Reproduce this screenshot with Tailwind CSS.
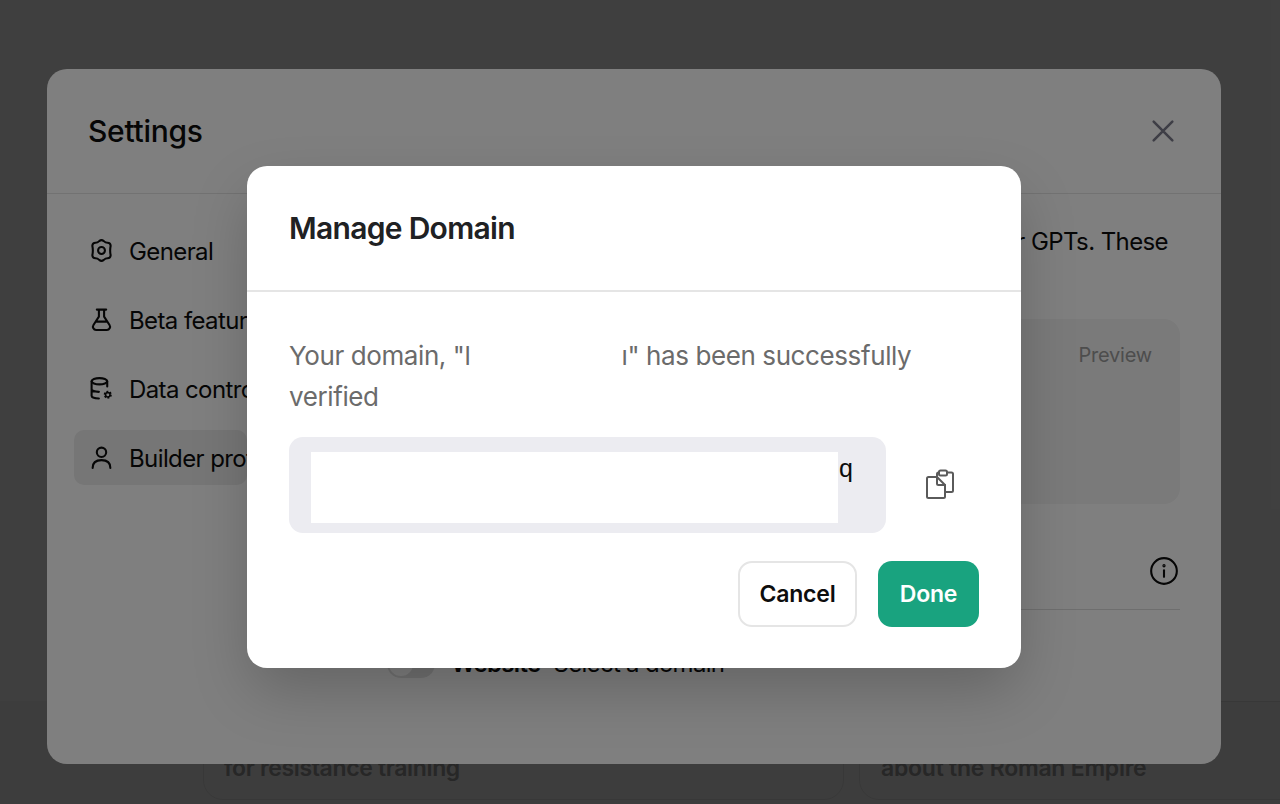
<!DOCTYPE html>
<html lang="en">
<head>
    <meta charset="UTF-8">
    <meta name="viewport" content="width=device-width, initial-scale=1.0">
    <title>Manage Domain</title>
    <script src="https://cdn.jsdelivr.net/npm/@tailwindcss/browser@4"></script>
</head>
<body class="relative h-[804px] overflow-hidden bg-white font-['Inter',sans-serif] text-[#0d0d0d]">
    <!-- page behind the modals -->
    <main class="flex h-full flex-col justify-end">
        <div class="flex h-[103px] gap-[15px] overflow-hidden bg-[#f6f6f6] pl-[203px]">
            <div class="h-[99px] w-[641px] shrink-0 rounded-[20px] border border-[#e3e3e3] pl-[20px] pt-[50px]">
                <p class="text-[23px] leading-[32px] font-semibold tracking-[-0.35px] text-[#9c9c9c]">for resistance training</p>
            </div>
            <div class="h-[99px] w-[641px] shrink-0 rounded-[20px] border border-[#e3e3e3] pl-[21px] pt-[50px]">
                <p class="text-[23px] leading-[32px] font-semibold tracking-[-0.25px] text-[#9c9c9c]">about the Roman Empire</p>
            </div>
        </div>
    </main>

    <!-- settings modal -->
    <div class="absolute inset-0 bg-black/50"></div>
    <section class="absolute left-[47px] top-[69px] flex h-[695px] w-[1174px] flex-col overflow-hidden rounded-[20px] bg-white">
        <header class="flex h-[125px] shrink-0 items-center justify-between border-b border-[#e5e5e5] pl-[41px] pr-[44px]">
            <h2 class="text-[30px] leading-[40px] font-[550] tracking-[-0.3px]">Settings</h2>
            <svg class="h-[28px] w-[28px] text-[#7d7d8c]" viewBox="0 0 24 24" fill="none" stroke="currentColor" stroke-width="2.200" stroke-linecap="round"><path d="M4 4 20 20M20 4 4 20"/></svg>
        </header>
        <div class="flex min-h-0 flex-1">
            <nav class="flex w-[200px] shrink-0 flex-col gap-[14px] pl-[27px] pt-[29px] text-[24px] tracking-[-0.6px] whitespace-nowrap">
                <a class="flex h-[55px] items-center gap-[15px] rounded-[10px] px-[15px]">
                    <svg class="h-[25px] w-[25px] shrink-0" viewBox="0 0 24 24" fill="none" stroke="currentColor" stroke-width="2" stroke-linejoin="round"><path d="M9.800 3Q12 1.200 14.200 3Q15.800 4.600 17.800 4.600Q20.600 4.600 20.800 7.400Q19.800 12 20.800 16.600Q20.600 19.400 17.800 19.400Q15.800 19.400 14.200 21Q12 22.800 9.800 21Q8.200 19.400 6.200 19.400Q3.400 19.400 3.200 16.600Q4.200 12 3.200 7.400Q3.400 4.600 6.200 4.600Q8.200 4.600 9.800 3Z"/><circle cx="12" cy="12" r="3.300"/></svg>
                    <span class="pt-[2px]">General</span>
                </a>
                <a class="flex h-[55px] items-center gap-[15px] rounded-[10px] px-[15px]">
                    <svg class="h-[25px] w-[25px] shrink-0" viewBox="0 0 24 24" fill="none" stroke="currentColor" stroke-width="2" stroke-linecap="round" stroke-linejoin="round"><path d="M7.500 2.500h9M9.500 2.500v6.700L4.300 17.300C3 19.300 4.400 22 6.800 22h10.400c2.400 0 3.800-2.700 2.500-4.700L14.500 9.200V2.500M6.500 14h11"/></svg>
                    <span class="pt-[2px]">Beta features</span>
                </a>
                <a class="flex h-[55px] items-center gap-[15px] rounded-[10px] px-[15px]">
                    <svg class="h-[25px] w-[25px] shrink-0" viewBox="0 0 24 24" fill="none" stroke="currentColor" stroke-width="2" stroke-linecap="round" stroke-linejoin="round"><ellipse cx="10" cy="5" rx="7.500" ry="3"/><path d="M2.500 5v14c0 1.500 3 2.600 7 2.600M17.500 5v5M2.500 12.500c0 1.500 3 2.700 7 2.700"/><circle cx="18" cy="18" r="2.700" stroke-width="2.400" stroke-dasharray="1.500 1.330" stroke-linecap="butt"/><circle cx="18" cy="18" r="2.200" stroke-width="1.400"/></svg>
                    <span class="pt-[2px]">Data controls</span>
                </a>
                <a class="flex h-[55px] items-center gap-[15px] rounded-[10px] bg-[#ececec] px-[15px]">
                    <svg class="h-[25px] w-[25px] shrink-0" viewBox="0 0 24 24" fill="none" stroke="currentColor" stroke-width="2" stroke-linecap="round"><circle cx="12" cy="7" r="4.500"/><path d="M3.500 22c0-5 3.500-7.500 8.500-7.500s8.500 2.500 8.500 7.500"/></svg>
                    <span class="pt-[2px]">Builder profile</span>
                </a>
            </nav>
            <div class="min-w-0 flex-1 pr-[41px] pt-[30px]">
                <p class="flex h-[36px] justify-end whitespace-nowrap pr-[12px] text-[24px] leading-[36px] tracking-[-0.6px]">Personalize your profile for your GPTs. These</p>
                <div class="mt-[59px] flex h-[185px] justify-end rounded-[16px] bg-[#f4f4f4] pr-[28px] pt-[22px]">
                    <span class="text-[20px] leading-[28px] tracking-[-0.2px] text-[#9b9b9b]">Preview</span>
                </div>
                <div class="flex h-[106px] items-center justify-end border-b border-[#dcdcdc] pr-[2px] pt-[28px]">
                    <svg class="h-[28px] w-[28px]" viewBox="0 0 24 24" fill="none" stroke="currentColor" stroke-width="1.800" stroke-linecap="round"><circle cx="12" cy="12" r="11"/><path d="M12 11.500v5.500"/><circle cx="12" cy="7.500" r="0.500"/></svg>
                </div>
                <div class="mt-[38px] flex items-center pl-[140px]">
                    <span class="flex h-[28px] w-[48px] items-center rounded-full bg-[#e3e3e3] pl-[2px]"><span class="h-[24px] w-[24px] rounded-full bg-white"></span></span>
                    <span class="ml-[16px] text-[24px] leading-[32px] tracking-[-0.7px]"><b class="font-semibold">Website</b> <span class="ml-[7px]">Select a domain</span></span>
                </div>
            </div>
        </div>
    </section>

    <!-- manage domain dialog -->
    <div class="absolute inset-0 bg-black/50"></div>
    <section class="absolute left-[247px] top-[166px] h-[502px] w-[774px] rounded-[20px] bg-white shadow-[0_25px_60px_-5px_rgba(0,0,0,0.22)]">
        <header class="flex h-[126px] items-center border-b-2 border-[#e5e5e5] pl-[42px]">
            <h2 class="text-[30px] leading-[40px] font-semibold tracking-[-0.7px] text-[#202123]">Manage Domain</h2>
        </header>
        <div class="px-[42px] pt-[43px]">
            <p class="h-[103px] text-[26px] leading-[41px] tracking-[-0.4px] text-[#6b6b6b]">Your domain, "l<span class="inline-block w-[151px]"></span>ı" has been successfully verified</p>
            <div class="mt-[-1px] flex items-center">
                <div class="flex h-[96px] w-[597px] items-start rounded-[14px] bg-[#ececf1] pl-[22px] pt-[15px]">
                    <div class="h-[71px] w-[527px] bg-white"></div>
                    <span class="ml-[1px] font-['Liberation_Sans',sans-serif] text-[25px] leading-[32px]">q</span>
                </div>
                <svg class="ml-[39px] h-[32px] w-[30px] text-[#5a5a5a]" viewBox="0 0 30 32" fill="none" stroke="currentColor" stroke-width="2" stroke-linecap="round" stroke-linejoin="round"><rect x="14" y="1.500" width="8" height="5" rx="1.500"/><path d="M12 7V5Q12 3.500 13.500 3.500H14M22 3.500H26.500Q28 3.500 28 5V21.500Q28 23 26.500 23H20"/><path d="M2 9.500Q2 8 3.500 8H12L20 16V27.500Q20 29 18.500 29H3.500Q2 29 2 27.500Z"/><path d="M12 8V14.500Q12 16 13.500 16H20"/></svg>
            </div>
            <div class="mt-[28px] flex justify-end gap-[21px]">
                <button class="h-[66px] w-[119px] rounded-[14px] border-2 border-[#e5e5e5] pt-[1px] text-[23px] font-semibold tracking-[-0.2px] text-[#0d0d0d]">Cancel</button>
                <button class="h-[66px] w-[101px] rounded-[14px] bg-[#19a37f] pt-[1px] text-[23px] font-semibold tracking-[-0.2px] text-white">Done</button>
            </div>
        </div>
    </section>
</body>
</html>
